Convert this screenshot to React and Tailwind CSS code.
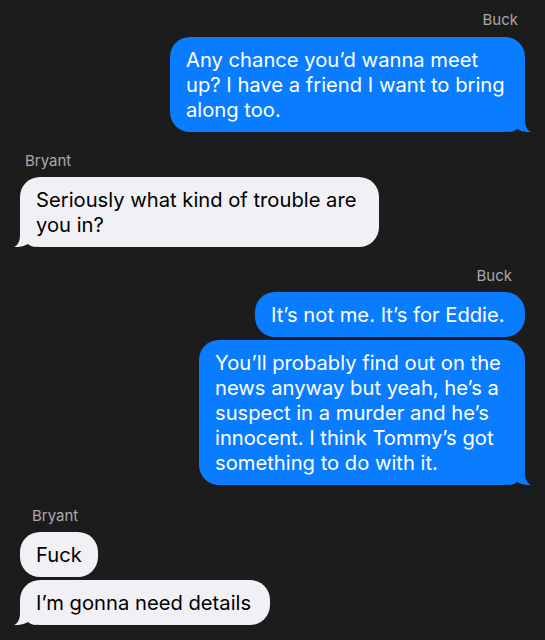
import React from "react";

function TailRight({ color }) {
  return (
    <svg className="absolute bottom-0 right-[-6px]" width="22" height="20" viewBox="0 0 22 20">
      <path d="M0 0 H16 V8 C16 14 18 18 22 20 C18 20.5 12 19.5 8 17 C6 19 3 20 0 20 Z" fill={color} />
    </svg>
  );
}

function TailLeft({ color }) {
  return (
    <svg className="absolute bottom-0 left-[-6px]" width="22" height="20" viewBox="0 0 22 20">
      <path d="M22 0 H6 V8 C6 14 4 18 0 20 C4 20.5 10 19.5 14 17 C16 19 19 20 22 20 Z" fill={color} />
    </svg>
  );
}

function Out({ lines, w, tail, className = "" }) {
  return (
    <div className={`relative self-end ${className}`} style={{ width: w }}>
      <div className="relative rounded-[20px] bg-[#0a7cff] px-4 py-[10px] text-white text-[20.2px] leading-[25px] whitespace-nowrap z-10">
        {lines.map((l, i) => (
          <div key={i}>{l}</div>
        ))}
      </div>
      {tail && <TailRight color="#0a7cff" />}
    </div>
  );
}

function In({ lines, w, tail, className = "" }) {
  return (
    <div className={`relative self-start ${className}`} style={{ width: w }}>
      <div className="relative rounded-[20px] bg-[#f1f0f5] px-4 py-[10px] text-black text-[20.2px] leading-[25px] whitespace-nowrap z-10">
        {lines.map((l, i) => (
          <div key={i}>{l}</div>
        ))}
      </div>
      {tail && <TailLeft color="#f1f0f5" />}
    </div>
  );
}

export default function App() {
  return (
    <div
      className="w-[545px] h-[640px] bg-[#1c1c1c] overflow-hidden flex flex-col px-[20px] pt-[11px]"
      style={{ fontFamily: "Inter, 'Noto Sans', sans-serif" }}
    >
      <div className="self-end pr-[7px] text-[15px] leading-[18px] text-[#a9a9ae]">Buck</div>
      <Out
        className="mt-[8px]"
        w={355}
        tail
        lines={["Any chance you’d wanna meet", "up? I have a friend I want to bring", "along too."]}
      />
      <div className="self-start mt-[20px] pl-[5px] text-[15px] leading-[18px] text-[#a9a9ae]">Bryant</div>
      <In className="mt-[7px]" w={359} tail lines={["Seriously what kind of trouble are", "you in?"]} />
      <div className="self-end mt-[20px] pr-[13px] text-[15px] leading-[18px] text-[#a9a9ae]">Buck</div>
      <Out className="mt-[7px]" w={270} lines={["It’s not me. It’s for Eddie."]} />
      <Out
        className="mt-[3px]"
        w={326}
        tail
        lines={[
          "You’ll probably find out on the",
          "news anyway but yeah, he’s a",
          "suspect in a murder and he’s",
          "innocent. I think Tommy’s got",
          "something to do with it.",
        ]}
      />
      <div className="self-start mt-[22px] pl-[12px] text-[15px] leading-[18px] text-[#a9a9ae]">Bryant</div>
      <In className="mt-[7px]" w={78} lines={["Fuck"]} />
      <In className="mt-[3px]" w={250} tail lines={["I’m gonna need details"]} />
    </div>
  );
}
